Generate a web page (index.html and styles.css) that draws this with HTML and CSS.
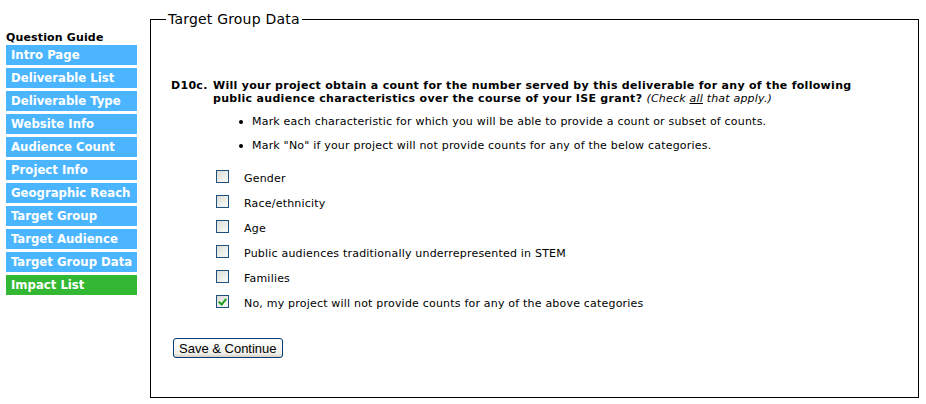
FILE: index.html
```html
<!DOCTYPE html>
<html lang="en">
<head>
    <meta charset="UTF-8">
    <title>Target Group Data</title>
    <link rel="stylesheet" href="styles.css">
</head>
<body>
    <div class="page">
        <div class="guide">
            <h3>Question Guide</h3>
            <a href="#">Intro Page</a>
            <a href="#">Deliverable List</a>
            <a href="#">Deliverable Type</a>
            <a href="#">Website Info</a>
            <a href="#">Audience Count</a>
            <a href="#">Project Info</a>
            <a href="#">Geographic Reach</a>
            <a href="#">Target Group</a>
            <a href="#">Target Audience</a>
            <a href="#">Target Group Data</a>
            <a href="#" class="next">Impact List</a>
        </div>

        <form method="post" action="#">
            <fieldset>
                <legend>Target Group Data</legend>

                <div class="question">
                    <span class="qnum">D10c.</span>
                    <span>Will your project obtain a count for the number served by this deliverable for any of the following<br>
                    public audience characteristics over the course of your ISE grant? <span class="hint">(Check <u>all</u> that apply.)</span></span>
                </div>

                <ul class="notes">
                    <li>Mark each characteristic for which you will be able to provide a count or subset of counts.</li>
                    <li>Mark "No" if your project will not provide counts for any of the below categories.</li>
                </ul>

                <div class="choices">
                    <label class="choice"><input type="checkbox" name="chars" value="gender"><span>Gender</span></label>
                    <label class="choice"><input type="checkbox" name="chars" value="race"><span>Race/ethnicity</span></label>
                    <label class="choice"><input type="checkbox" name="chars" value="age"><span>Age</span></label>
                    <label class="choice"><input type="checkbox" name="chars" value="stem"><span>Public audiences traditionally underrepresented in STEM</span></label>
                    <label class="choice"><input type="checkbox" name="chars" value="families"><span>Families</span></label>
                    <label class="choice"><input type="checkbox" name="chars" value="none" checked><span>No, my project will not provide counts for any of the above categories</span></label>
                </div>

                <button type="submit">Save &amp; Continue</button>
            </fieldset>
        </form>
    </div>
</body>
</html>
```

FILE: styles.css
```css
* {
    box-sizing: border-box;
}

body {
    margin: 0;
    font-family: "DejaVu Sans", Verdana, sans-serif;
    font-size: 11px;
    letter-spacing: 0.2px;
    color: #000;
    background-color: #fff;
}

.page {
    display: flex;
    align-items: flex-start;
    padding: 11px 0 0 6px;
}

/* left question guide */
.guide {
    width: 131px;
    margin-top: 20px;
    margin-right: 13px;
}

.guide h3 {
    margin: 0 0 1px;
    font-size: 11px;
    letter-spacing: 0.15px;
    line-height: 13px;
}

.guide a {
    display: block;
    height: 20px;
    margin-bottom: 3px;
    padding-left: 5px;
    background-color: #4bb5ff;
    color: #fff;
    font-family: "DejaVu Sans Condensed", "DejaVu Sans", sans-serif;
    font-size: 13px;
    font-weight: bold;
    letter-spacing: 0;
    line-height: 20px;
    text-decoration: none;
    white-space: nowrap;
}

.guide a.next {
    background-color: #33b833;
}

/* main form */
form {
    margin: 0;
}

fieldset {
    width: 769px;
    height: 387px;
    margin: 0;
    padding: 0 15px;
    border: 1px solid #000;
}

legend {
    padding: 0 2px;
    font-size: 14px;
    letter-spacing: 0.2px;
    line-height: 16px;
}

.question {
    display: flex;
    margin: 52px 0 0 5px;
    font-weight: bold;
    letter-spacing: 0.3px;
    line-height: 13px;
}

.qnum {
    flex: none;
    width: 42px;
}

.hint {
    font-weight: normal;
    font-style: italic;
    letter-spacing: 0.2px;
}

.notes {
    margin: 10px 0 0;
    padding-left: 73px;
    list-style: none;
}

.notes li {
    display: flex;
    align-items: center;
    line-height: 14px;
    margin-bottom: 10px;
}

.notes li::before {
    content: "";
    flex: none;
    width: 4px;
    height: 4px;
    margin-right: 9px;
    border-radius: 50%;
    background-color: #000;
}

.choices {
    padding-left: 50px;
    padding-top: 1px;
}

.choice {
    display: flex;
    align-items: flex-start;
    height: 25px;
}

.choice input {
    appearance: none;
    -webkit-appearance: none;
    position: relative;
    flex: none;
    width: 13px;
    height: 13px;
    margin: 6px 15px 0 0;
    border: 1px solid #1c5180;
    background: linear-gradient(135deg, #dcdcd6, #fbfbf9);
}

.choice input:checked::after {
    content: "";
    position: absolute;
    left: 3px;
    top: 1px;
    width: 3px;
    height: 6px;
    border-right: 2px solid #21a121;
    border-bottom: 2px solid #21a121;
    transform: rotate(40deg);
}

.choice span {
    margin-top: 8px;
    line-height: 14px;
}

button {
    height: 20px;
    margin: 24px 0 0 7px;
    padding: 0 5px;
    border: 1px solid #003c74;
    border-radius: 3px;
    background: linear-gradient(#ffffff, #f0f0ea 80%, #d6d0c5);
    font-family: "Liberation Sans", Arial, sans-serif;
    font-size: 13px;
    letter-spacing: 0;
    color: #000;
}
```
